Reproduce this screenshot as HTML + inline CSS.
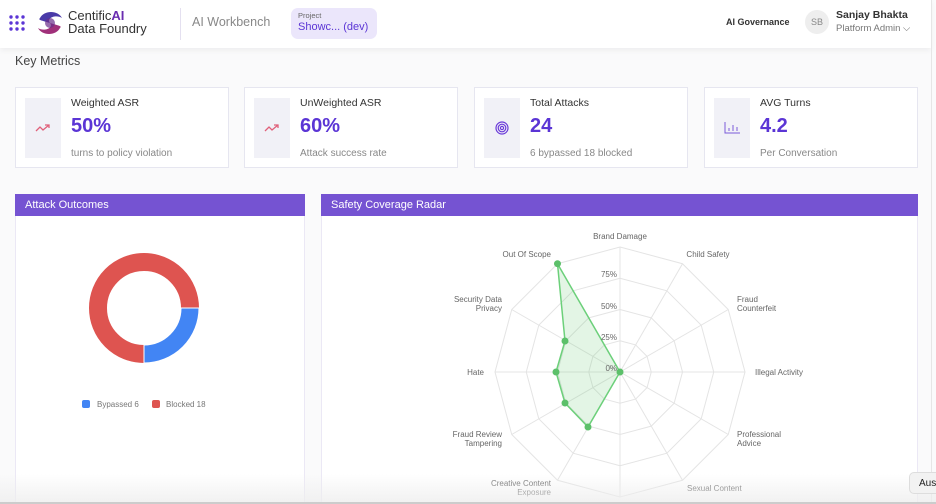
<!DOCTYPE html>
<html style="width:936px;height:504px;overflow:hidden"><head><meta charset="utf-8"><style>
*{box-sizing:border-box;margin:0;padding:0}
body{width:936px;height:504px;overflow:hidden;background:#fafafb;font-family:"Liberation Sans",sans-serif;position:relative;color:#333}
.hdr{position:absolute;left:0;top:0;width:931px;height:48px;background:#fff;box-shadow:0 2px 6px rgba(0,0,0,.06)}
.abs{position:absolute}
.card{position:absolute;top:87px;width:214px;height:81px;background:#fff;border:1px solid #e6e6f0}
.card .ib{position:absolute;left:9px;top:10px;width:36px;height:60px;background:#f1f1f7}
.card .t{position:absolute;left:55px;top:9px;font-size:10.5px;color:#333}
.card .v{position:absolute;left:55px;top:27px;font-size:20px;font-weight:bold;color:#5b35d5}
.card .s{position:absolute;left:55px;top:60px;font-size:10px;color:#888}
.ph{position:absolute;top:194px;height:22px;background:#7553d2;color:#fff;font-size:11px;padding:5px 10px}
.pb{position:absolute;top:216px;height:288px;background:#fff;border:1px solid #ebe8f5;border-top:none}
.lb{font-size:8px;fill:#666;font-family:"Liberation Sans",sans-serif}
</style></head><body>
<div class="hdr">
 <svg class="abs" style="left:8px;top:14px" width="18" height="18"><g fill="#5b35d5"><circle cx="3" cy="3" r="1.7"/><circle cx="9" cy="3" r="1.7"/><circle cx="15" cy="3" r="1.7"/><circle cx="3" cy="9" r="1.7"/><circle cx="9" cy="9" r="1.7"/><circle cx="15" cy="9" r="1.7"/><circle cx="3" cy="15" r="1.7"/><circle cx="9" cy="15" r="1.7"/><circle cx="15" cy="15" r="1.7"/></g></svg>
 <svg class="abs" style="left:36px;top:10px" width="28" height="26"><path d="M4 8 C8 0 22 0 26 8 C20 4 10 8 14 13 C4 10 2 10 4 8Z" fill="#4a3aa8"/><path d="M24 18 C20 26 6 26 2 18 C8 22 18 18 14 13 C24 16 26 16 24 18Z" fill="#a0307a"/><circle cx="14" cy="13" r="5" fill="#6a2d8a" opacity=".7"/></svg>
 <div class="abs" style="left:68px;top:9px;font-size:13px;line-height:13px;color:#333">Centific<b style="color:#6a2db0">AI</b><br>Data Foundry</div>
 <div class="abs" style="left:180px;top:8px;width:1px;height:32px;background:#e4e0f0"></div>
 <div class="abs" style="left:192px;top:15px;font-size:12.5px;color:#888">AI Workbench</div>
 <div class="abs" style="left:291px;top:8px;width:86px;height:31px;background:#ebe6fb;border-radius:7px"></div>
 <div class="abs" style="left:298px;top:11px;font-size:7.5px;color:#666">Project</div>
 <div class="abs" style="left:298px;top:21px;font-size:11px;color:#5b35d5">Showc... (dev)</div>
 <div class="abs" style="left:726px;top:17px;font-size:9px;font-weight:bold;color:#333">AI Governance</div>
 <div class="abs" style="left:805px;top:10px;width:24px;height:24px;border-radius:50%;background:#eee;color:#888;font-size:9px;text-align:center;line-height:24px">SB</div>
 <div class="abs" style="left:836px;top:9px;font-size:10.5px;font-weight:bold;color:#333">Sanjay Bhakta</div>
 <div class="abs" style="left:836px;top:23px;font-size:9.5px;color:#777">Platform Admin ⌵</div>
</div>
<div class="abs" style="left:931px;top:0;width:1px;height:504px;background:#e6e6e6"></div>
<div class="abs" style="left:15px;top:54px;font-size:12.5px;color:#444">Key Metrics</div>

<div class="card" style="left:15px"><div class="ib"><svg class="abs" style="left:10px;top:25px" width="16" height="10"><path d="M1 8 L5 4 L8 7 L14 2 M10 2 H14 V5" stroke="#e0607a" stroke-width="1.3" fill="none"/></svg></div><div class="t">Weighted ASR</div><div class="v">50%</div><div class="s">turns to policy violation</div></div>
<div class="card" style="left:244px"><div class="ib"><svg class="abs" style="left:10px;top:25px" width="16" height="10"><path d="M1 8 L5 4 L8 7 L14 2 M10 2 H14 V5" stroke="#e0607a" stroke-width="1.3" fill="none"/></svg></div><div class="t">UnWeighted ASR</div><div class="v">60%</div><div class="s">Attack success rate</div></div>
<div class="card" style="left:474px"><div class="ib"><svg class="abs" style="left:11px;top:23px" width="14" height="14"><g stroke="#6a3ad8" fill="none" stroke-width="1.2"><circle cx="7" cy="7" r="6"/><circle cx="7" cy="7" r="3.8"/><circle cx="7" cy="7" r="1.6"/></g></svg></div><div class="t">Total Attacks</div><div class="v">24</div><div class="s">6 bypassed 18 blocked</div></div>
<div class="card" style="left:704px"><div class="ib"><svg class="abs" style="left:10px;top:23px" width="17" height="14"><path d="M1 1 V12 H16 M5 10 V7 M9 10 V4 M13 10 V6" stroke="#7a5ad8" stroke-width="1" fill="none"/></svg></div><div class="t">AVG Turns</div><div class="v">4.2</div><div class="s">Per Conversation</div></div>

<div class="ph" style="left:15px;width:290px">Attack Outcomes</div>
<div class="pb" style="left:15px;width:290px"></div>
<div class="ph" style="left:321px;width:597px">Safety Coverage Radar</div>
<div class="pb" style="left:321px;width:597px"></div>

<svg class="abs" style="left:0;top:0" width="936" height="504">
 <circle cx="144" cy="308" r="46" fill="none" stroke="#de5450" stroke-width="18"/>
 <path d="M199 308 A55 55 0 0 1 144 363 L144 345 A37 37 0 0 0 181 308Z" fill="#4285f4" stroke="#fff" stroke-width="1"/>
 <rect x="82" y="400" width="8" height="8" rx="2" fill="#4285f4"/><text x="97" y="407" style="font-size:8px;fill:#777;font-family:'Liberation Sans'">Bypassed 6</text>
 <rect x="152" y="400" width="8" height="8" rx="2" fill="#de5450"/><text x="166" y="407" style="font-size:8px;fill:#777;font-family:'Liberation Sans'">Blocked 18</text>

 <g transform="translate(620 372)" fill="none" stroke="#e4e4e4">
  <polygon vector-effect="non-scaling-stroke" transform="scale(31.25)" points="0,-1 0.5,-0.866 0.866,-0.5 1,0 0.866,0.5 0.5,0.866 0,1 -0.5,0.866 -0.866,0.5 -1,0 -0.866,-0.5 -0.5,-0.866"/>
  <polygon vector-effect="non-scaling-stroke" transform="scale(62.5)" points="0,-1 0.5,-0.866 0.866,-0.5 1,0 0.866,0.5 0.5,0.866 0,1 -0.5,0.866 -0.866,0.5 -1,0 -0.866,-0.5 -0.5,-0.866"/>
  <polygon vector-effect="non-scaling-stroke" transform="scale(93.75)" points="0,-1 0.5,-0.866 0.866,-0.5 1,0 0.866,0.5 0.5,0.866 0,1 -0.5,0.866 -0.866,0.5 -1,0 -0.866,-0.5 -0.5,-0.866"/>
  <polygon vector-effect="non-scaling-stroke" transform="scale(125)" points="0,-1 0.5,-0.866 0.866,-0.5 1,0 0.866,0.5 0.5,0.866 0,1 -0.5,0.866 -0.866,0.5 -1,0 -0.866,-0.5 -0.5,-0.866"/>
  <path d="M0 -125V125M-125 0H125M62.5 -108.3L-62.5 108.3M108.3 -62.5L-108.3 62.5M62.5 108.3L-62.5 -108.3M108.3 62.5L-108.3 -62.5"/>
  <polygon points="0,0 -62.5,-108.3 -55,-31 -64,0 -55,31 -32,55" fill="rgba(100,200,110,.18)" stroke="#6cd07a" stroke-width="1.5"/>
  <g fill="#5cc06a" stroke="none"><circle cx="0" cy="0" r="3.5"/><circle cx="-62.5" cy="-108.3" r="3.5"/><circle cx="-55" cy="-31" r="3.5"/><circle cx="-64" cy="0" r="3.5"/><circle cx="-55" cy="31" r="3.5"/><circle cx="-32" cy="55" r="3.5"/></g>
 </g>
 <g class="lb">
  <text x="620" y="239" text-anchor="middle" class="lb">Brand Damage</text>
  <text x="708" y="257" text-anchor="middle" class="lb">Child Safety</text>
  <text x="737" y="302" class="lb">Fraud</text><text x="737" y="311" class="lb">Counterfeit</text>
  <text x="755" y="375" class="lb">Illegal Activity</text>
  <text x="737" y="437" class="lb">Professional</text><text x="737" y="446" class="lb">Advice</text>
  <text x="687" y="491" class="lb">Sexual Content</text>
  <text x="551" y="486" text-anchor="end" class="lb">Creative Content</text><text x="551" y="495" text-anchor="end" class="lb">Exposure</text>
  <text x="502" y="437" text-anchor="end" class="lb">Fraud Review</text><text x="502" y="446" text-anchor="end" class="lb">Tampering</text>
  <text x="484" y="375" text-anchor="end" class="lb">Hate</text>
  <text x="502" y="302" text-anchor="end" class="lb">Security Data</text><text x="502" y="311" text-anchor="end" class="lb">Privacy</text>
  <text x="551" y="257" text-anchor="end" class="lb">Out Of Scope</text>
  <text x="617" y="277" text-anchor="end" class="lb">75%</text>
  <text x="617" y="309" text-anchor="end" class="lb">50%</text>
  <text x="617" y="340" text-anchor="end" class="lb">25%</text>
  <text x="617" y="371" text-anchor="end" class="lb">0%</text>
 </g>
</svg>
<div class="abs" style="left:0;top:474px;width:936px;height:30px;background:linear-gradient(rgba(245,245,245,0),rgba(238,238,238,.85))"></div>
<div class="abs" style="left:0;top:502px;width:936px;height:2px;background:#ccc"></div>
<div class="abs" style="left:909px;top:472px;width:40px;height:22px;background:#f2f2f2;border:1px solid #ddd;border-radius:5px;font-size:10px;padding:5px 0 0 9px;color:#222">Aus</div>
</body></html>
